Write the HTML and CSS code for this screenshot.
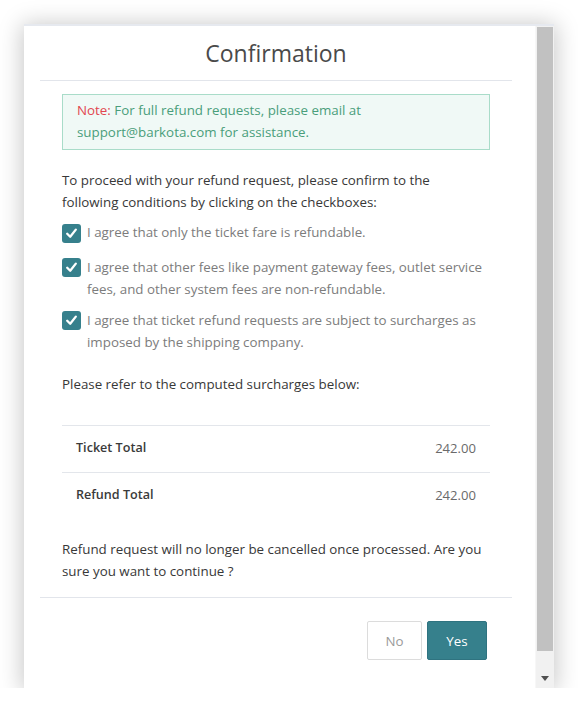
FILE: index.html
```html
<!DOCTYPE html>
<html lang="en">
<head>
<meta charset="utf-8">
<title>Confirmation</title>
<link rel="stylesheet" href="styles.css">
</head>
<body>
<div class="page">
  <div class="dialog">
    <div class="main">
      <div class="header">
        <h1 class="title">Confirmation</h1>
      </div>
      <div class="body">
        <div class="note"><span class="note-label">Note:</span> For full refund requests, please email at<br>support@barkota.com for assistance.</div>
        <p class="intro">To proceed with your refund request, please confirm to the<br>following conditions by clicking on the checkboxes:</p>
        <div class="checks">
          <label class="check check-first">
            <span class="box"><svg viewBox="0 0 19 19" width="19" height="19"><path d="M5.2 9.8 L8.2 12.8 L13.8 5.6" fill="none" stroke="#fff" stroke-width="2.3" stroke-linecap="round" stroke-linejoin="round"/></svg></span>
            <span class="check-text">I agree that only the ticket fare is refundable.</span>
          </label>
          <label class="check">
            <span class="box"><svg viewBox="0 0 19 19" width="19" height="19"><path d="M5.2 9.8 L8.2 12.8 L13.8 5.6" fill="none" stroke="#fff" stroke-width="2.3" stroke-linecap="round" stroke-linejoin="round"/></svg></span>
            <span class="check-text">I agree that other fees like payment gateway fees, outlet service<br>fees, and other system fees are non-refundable.</span>
          </label>
          <label class="check">
            <span class="box"><svg viewBox="0 0 19 19" width="19" height="19"><path d="M5.2 9.8 L8.2 12.8 L13.8 5.6" fill="none" stroke="#fff" stroke-width="2.3" stroke-linecap="round" stroke-linejoin="round"/></svg></span>
            <span class="check-text">I agree that ticket refund requests are subject to surcharges as<br>imposed by the shipping company.</span>
          </label>
        </div>
        <p class="refer">Please refer to the computed surcharges below:</p>
        <div class="totals">
          <div class="row"><span class="label">Ticket Total</span><span class="value">242.00</span></div>
          <div class="row"><span class="label">Refund Total</span><span class="value">242.00</span></div>
        </div>
        <p class="warn">Refund request will no longer be cancelled once processed. Are you<br>sure you want to continue ?</p>
      </div>
      <div class="footer">
        <button class="btn btn-no">No</button>
        <button class="btn btn-yes">Yes</button>
      </div>
    </div>
    <div class="scrollbar">
      <div class="thumb"></div>
      <div class="arrow-area"><span class="arrow"></span></div>
    </div>
  </div>
</div>
</body>
</html>
```
FILE: styles.css
```css
* { box-sizing: border-box; }

body {
  margin: 0;
  background: #ffffff;
  font-family: "Open Sans", "Noto Sans", sans-serif;
  font-size: 13.35px;
  line-height: 22px;
  color: #3a3a3a;
}

.page {
  padding: 24px 0 0 24px;
}

.dialog {
  width: 530px;
  height: 664px;
  display: flex;
  background: #ffffff;
  border-top: 2px solid #e6e9ef;
  box-shadow: 0 2px 22px 2px rgba(0, 0, 0, 0.22);
}

.main {
  flex: 1;
  display: flex;
  flex-direction: column;
}

.header {
  margin: 0 23px 0 16px;
  padding: 11px 0;
  border-bottom: 1px solid #e2e5eb;
  text-align: center;
}

.title {
  margin: 0;
  font-size: 23px;
  line-height: 32px;
  font-weight: 400;
  color: #4a4a4a;
}

.body {
  margin: 0 23px 0 16px;
  padding: 0 22px;
}

.note {
  margin-top: 13px;
  padding: 4px 14px 6px;
  background: #f0f9f6;
  border: 1px solid #a9dcc9;
  color: #4a9e7b;
}

.note-label {
  color: #e2474f;
}

.intro {
  margin: 19px 0 0;
  color: #383838;
}

.checks {
  margin-top: 8px;
  display: flex;
  flex-direction: column;
}

.check {
  display: flex;
  align-items: flex-start;
  gap: 6px;
  margin-top: 9px;
  color: #7c7c7c;
}

.check-first {
  margin-top: 0;
  margin-bottom: 4px;
}

.box {
  flex: none;
  width: 19px;
  height: 19px;
  margin-top: 2px;
  border-radius: 3px;
  background: #36808c;
  display: flex;
}

.check-first .box {
  margin-top: 3px;
}

.refer {
  margin: 20px 0 0;
  color: #383838;
}

.totals {
  margin-top: 30px;
}

.row {
  display: flex;
  justify-content: space-between;
  border-top: 1px solid #e3e6eb;
  padding: 11px 14px 13px;
}

.label {
  font-weight: 600;
  font-size: 12.6px;
  color: #3a3a3a;
}

.value {
  font-size: 13.1px;
  color: #6a6a6a;
}

.warn {
  margin: 19px 0 0;
  color: #383838;
}

.footer {
  margin: 15px 23px 0 16px;
  padding: 23px 25px 0 0;
  border-top: 1px solid #e2e5eb;
  display: flex;
  justify-content: flex-end;
  gap: 5px;
}

.btn {
  height: 39px;
  font-family: inherit;
  font-size: 13.35px;
  border-radius: 2px;
  cursor: pointer;
}

.btn-no {
  width: 55px;
  background: #ffffff;
  border: 1px solid #dcdcdc;
  color: #9a9a9a;
}

.btn-yes {
  width: 60px;
  background: #36808c;
  border: 1px solid #2f7380;
  color: #ffffff;
}

.scrollbar {
  width: 19px;
  flex: none;
  background: #f1f1f1;
  border-left: 1px solid #f7f7f7;
  display: flex;
  flex-direction: column;
  padding-top: 1px;
}

.thumb {
  height: 624px;
  margin: 0 1px 0 1px;
  background: #c1c1c1;
}

.arrow-area {
  flex: 1;
  display: flex;
  justify-content: center;
  padding-top: 25px;
}

.arrow {
  width: 0;
  height: 0;
  border-left: 4px solid transparent;
  border-right: 4px solid transparent;
  border-top: 5px solid #505050;
}
```
